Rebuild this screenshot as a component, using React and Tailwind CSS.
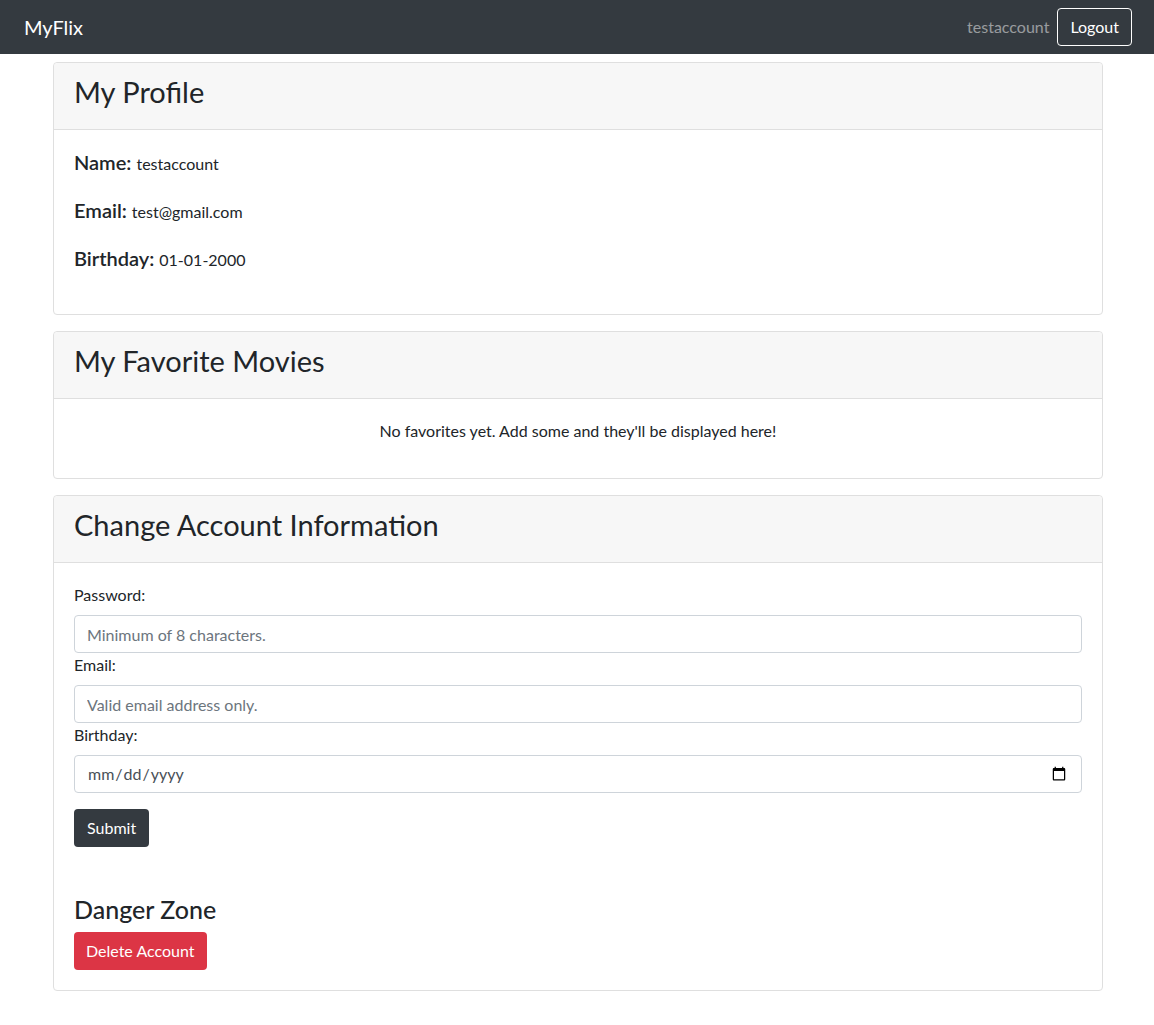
import React from "react";

function Card({ title, children }) {
  return (
    <div className="border border-[#dfdfdf] rounded-[4px] bg-white">
      <div className="bg-[#f7f7f7] border-b border-[#dfdfdf] px-5 pt-[9px] pb-[18px] rounded-t-[4px]">
        <h2 className="text-[29px] leading-[39px] font-normal text-[#212529]">{title}</h2>
      </div>
      <div className="p-5">{children}</div>
    </div>
  );
}

const inputClass =
  "block w-full h-[38px] border border-[#ced4da] rounded-[4px] px-3 text-base text-[#495057] placeholder:text-[#6c757d] outline-none bg-white";

function InfoRow({ label, value }) {
  return (
    <div className="h-6 mb-6 flex items-baseline gap-[5px]">
      <span className="text-xl leading-6 font-semibold">{label}</span>
      <span>{value}</span>
    </div>
  );
}

export default function App() {
  return (
    <div className="min-h-screen bg-white text-[#212529] text-base leading-6" style={{ fontFamily: 'Lato, "Noto Sans", sans-serif' }}>
      <nav className="bg-[#343a40] h-[54px] px-[22px] py-2 flex items-center justify-between">
        <a className="text-white text-xl leading-[28px] ml-[2px]">MyFlix</a>
        <div className="flex items-center gap-2">
          <span className="text-white/50">testaccount</span>
          <button className="border border-white rounded-[4px] text-white px-3 h-[38px]">Logout</button>
        </div>
      </nav>

      <div className="w-[1050px] ml-[53px] mt-2 pb-8 flex flex-col gap-4">
        <Card title="My Profile">
          <InfoRow label="Name:" value="testaccount" />
          <InfoRow label="Email:" value="test@gmail.com" />
          <InfoRow label="Birthday:" value="01-01-2000" />
        </Card>

        <Card title="My Favorite Movies">
          <p className="text-center mb-[15px]">No favorites yet. Add some and they'll be displayed here!</p>
        </Card>

        <Card title="Change Account Information">
          <form>
            <label className="block mb-2">Password:</label>
            <input type="password" className={inputClass} placeholder="Minimum of 8 characters." />
            <label className="block mb-2">Email:</label>
            <input type="email" className={inputClass} placeholder="Valid email address only." />
            <label className="block mb-2">Birthday:</label>
            <input type="date" className={inputClass} />
            <button type="button" className="mt-4 bg-[#343a40] text-white rounded-[4px] px-[13px] h-[38px]">Submit</button>
          </form>
          <h4 className="text-[25px] leading-[29px] font-medium mt-[48px] mb-2">Danger Zone</h4>
          <button className="bg-[#dc3545] text-white rounded-[4px] px-3 h-[38px]">Delete Account</button>
        </Card>
      </div>
    </div>
  );
}
